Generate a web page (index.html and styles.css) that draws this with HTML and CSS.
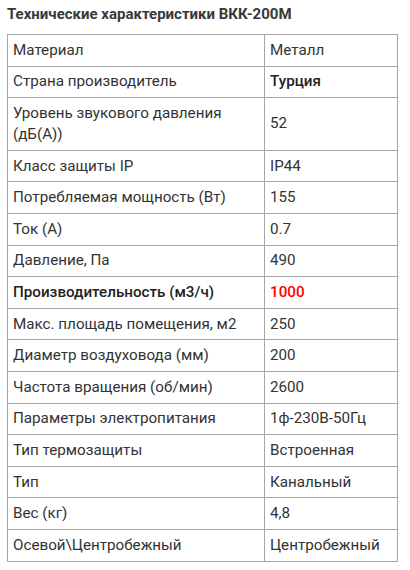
FILE: index.html
```html
<!DOCTYPE html>
<html lang="ru">
<head>
<meta charset="utf-8">
<link rel="stylesheet" href="styles.css">
</head>
<body>
<div class="wrap">
  <h3 class="title">Технические характеристики ВКК-200М</h3>
  <table class="specs">
    <colgroup><col class="c1"><col class="c2"></colgroup>
    <tbody>
      <tr><td>Материал</td><td>Металл</td></tr>
      <tr><td>Страна производитель</td><td><b>Турция</b></td></tr>
      <tr><td>Уровень звукового давления (дБ(А))</td><td>52</td></tr>
      <tr><td>Класс защиты IP</td><td>IP44</td></tr>
      <tr><td>Потребляемая мощность (Вт)</td><td>155</td></tr>
      <tr><td>Ток (А)</td><td>0.7</td></tr>
      <tr><td>Давление, Па</td><td>490</td></tr>
      <tr><td><b>Производительность (м3/ч)</b></td><td><b class="red">1000</b></td></tr>
      <tr><td>Макс. площадь помещения, м2</td><td>250</td></tr>
      <tr><td>Диаметр воздуховода (мм)</td><td>200</td></tr>
      <tr><td>Частота вращения (об/мин)</td><td>2600</td></tr>
      <tr><td>Параметры электропитания</td><td>1ф-230В-50Гц</td></tr>
      <tr><td>Тип термозащиты</td><td>Встроенная</td></tr>
      <tr><td>Тип</td><td>Канальный</td></tr>
      <tr><td>Вес (кг)</td><td>4,8</td></tr>
      <tr><td>Осевой\Центробежный</td><td>Центробежный</td></tr>
    </tbody>
  </table>
</div>
</body>
</html>
```
FILE: styles.css
```css
html, body {
  margin: 0;
  padding: 0;
  background: #fff;
}
.wrap {
  padding: 5px 7px;
  font-family: Roboto, "Liberation Sans", sans-serif;
  color: #333;
}
.title {
  margin: 0 0 10px;
  font-size: 15px;
  line-height: 19px;
  font-weight: 700;
  color: #383838;
}
.specs {
  width: 390px;
  border-collapse: collapse;
  table-layout: fixed;
  font-size: 15.2px;
  line-height: 21px;
}
.c1 { width: 257px; }
.c2 { width: 133px; }
.specs td {
  border: 1px solid #a6a6a6;
  padding: 4.8px 5px;
  vertical-align: middle;
  text-align: left;
}
.specs b { font-weight: 500; color: #222; }
.specs .red { color: #f00; }
```
